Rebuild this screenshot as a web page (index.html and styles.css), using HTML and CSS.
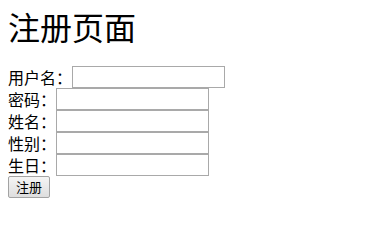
FILE: index.html
```html
<!DOCTYPE html>
<html lang="zh-CN">
<head>
<meta charset="utf-8">
<title>注册页面</title>
<link rel="stylesheet" href="styles.css">
</head>
<body>
<h1 class="title">注册页面</h1>
<form class="form">
  <div class="row"><label class="label">用户名：</label><input class="field" type="text"></div>
  <div class="row"><label class="label">密码：</label><input class="field" type="password"></div>
  <div class="row"><label class="label">姓名：</label><input class="field" type="text"></div>
  <div class="row"><label class="label">性别：</label><input class="field" type="text"></div>
  <div class="row"><label class="label">生日：</label><input class="field" type="text"></div>
  <div class="row"><button class="btn" type="button">注册</button></div>
</form>
</body>
</html>
```
FILE: styles.css
```css
html, body {
  background: #ffffff;
}
body {
  margin: 8px;
  color: #000000;
  font-family: "Liberation Serif", "Noto Sans CJK SC", serif;
}
.title {
  margin: 0 0 22px 0;
  font-size: 32px;
  line-height: 36px;
  font-weight: normal;
  font-family: "Noto Sans CJK SC", serif;
}
.form {
  display: flex;
  flex-direction: column;
  margin: 0;
}
.row {
  display: flex;
  align-items: center;
  height: 22px;
}
.label {
  font-size: 16px;
  line-height: 22px;
  font-family: "Noto Sans CJK SC", sans-serif;
}
.field {
  box-sizing: border-box;
  width: 153px;
  height: 22px;
  margin: 0;
  padding: 1px 2px;
  border: 1px solid #a9a9a9;
  background: #ffffff;
  outline: none;
}
.btn {
  box-sizing: border-box;
  width: 42px;
  height: 22px;
  margin: 0;
  padding: 0;
  font-size: 13px;
  line-height: 20px;
  font-family: "Noto Sans CJK SC", sans-serif;
  color: #000000;
  border: 1px solid #a3a3a3;
  border-radius: 2px;
  background: linear-gradient(#f5f5f5, #dedede);
}
```
